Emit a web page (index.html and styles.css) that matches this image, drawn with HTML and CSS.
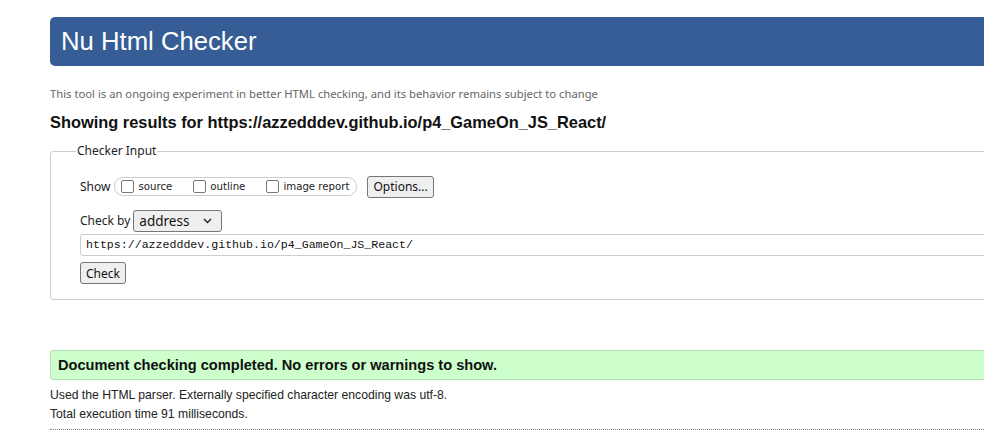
FILE: index.html
```html
<!DOCTYPE html>
<html lang="en">
<head>
<meta charset="utf-8">
<title>Nu Html Checker</title>
<link rel="stylesheet" href="styles.css">
</head>
<body>
<div class="page">
  <h1 class="banner">Nu Html Checker</h1>
  <p class="tagline">This tool is an ongoing experiment in better HTML checking, and its behavior remains subject to change</p>
  <h2 class="results-for">Showing results for https://azzedddev.github.io/p4_GameOn_JS_React/</h2>
  <fieldset class="checker">
    <legend class="checker-legend">Checker Input</legend>
    <div class="row show-row">
      <span class="label">Show</span>
      <span class="show-group">
        <span class="opt"><span class="cb"></span>source</span>
        <span class="opt"><span class="cb"></span>outline</span>
        <span class="opt"><span class="cb"></span>image report</span>
      </span>
      <span class="btn options-btn">Options...</span>
    </div>
    <div class="row checkby-row">
      <span class="label">Check by</span>
      <span class="select">address
        <svg class="chev" width="9" height="6" viewBox="0 0 9 6"><path d="M1 1 L4.5 4.5 L8 1" fill="none" stroke="#222" stroke-width="1.4"/></svg>
      </span>
    </div>
    <div class="url-input">https://azzedddev.github.io/p4_GameOn_JS_React/</div>
    <div class="row"><span class="btn check-btn">Check</span></div>
  </fieldset>
  <p class="success">Document checking completed. No errors or warnings to show.</p>
  <p class="meta">Used the HTML parser. Externally specified character encoding was utf-8.</p>
  <p class="meta">Total execution time 91 milliseconds.</p>
  <div class="dotted"></div>
</div>
</body>
</html>
```
FILE: styles.css
```css
html, body {
  margin: 0;
  padding: 0;
  background: #fff;
  overflow: hidden;
}
.page {
  margin-left: 50px;
  width: 1100px;
  padding-top: 17px;
  font-family: "Liberation Sans", Arial, sans-serif;
  color: #111;
}
.banner {
  margin: 0;
  height: 49px;
  line-height: 49px;
  background: #365d95;
  color: #fff;
  border-radius: 5px;
  padding-left: 11px;
  font-size: 25.7px;
  font-weight: normal;
}
.tagline {
  margin: 21px 0 0;
  font-family: "Noto Sans", sans-serif;
  font-size: 11.25px;
  line-height: 14px;
  color: #666;
}
.results-for {
  margin: 11px 0 0;
  font-size: 16.4px;
  line-height: 20px;
  font-weight: bold;
  color: #111;
}
.checker {
  margin: 11px 0 0;
  padding: 0 0 15px 29px;
  border: 1px solid #ccc;
  border-radius: 3px;
  font-family: "Noto Sans", sans-serif;
  font-size: 12px;
  color: #222;
}
.checker-legend {
  margin-left: -4px;
  padding: 0 1px;
  line-height: 16px;
}
.row {
  display: flex;
  align-items: center;
}
.show-row {
  margin-top: 17px;
  height: 21px;
}
.label {
  line-height: 16px;
}
.show-group {
  display: flex;
  align-items: center;
  margin-left: 4px;
  height: 17px;
  border: 1px solid #ccc;
  border-radius: 9px;
  padding: 0 7px 0 6px;
  font-family: "DejaVu Sans", sans-serif;
  font-size: 10.2px;
}
.opt {
  display: flex;
  align-items: center;
  margin-right: 21px;
}
.opt:last-child {
  margin-right: 0;
}
.cb {
  width: 11px;
  height: 11px;
  border: 1px solid #767676;
  border-radius: 2px;
  margin-right: 4px;
  background: #fff;
}
.btn {
  display: inline-flex;
  align-items: center;
  height: 20px;
  padding: 0 5px;
  border: 1px solid #767676;
  border-radius: 3px;
  background: #efefef;
  font-size: 12px;
  color: #111;
}
.options-btn {
  margin-left: 10px;
}
.checkby-row {
  margin-top: 13px;
}
.select {
  display: inline-flex;
  align-items: center;
  justify-content: space-between;
  box-sizing: border-box;
  width: 89px;
  height: 22px;
  margin-left: 3px;
  padding: 0 9px 0 5px;
  border: 1px solid #767676;
  border-radius: 3px;
  background: #efefef;
  font-size: 13.5px;
  color: #111;
}
.url-input {
  margin-top: 2px;
  box-sizing: border-box;
  height: 22px;
  line-height: 20px;
  border: 1px solid #ccc;
  border-radius: 3px;
  padding-left: 5px;
  font-family: "Liberation Mono", monospace;
  font-size: 11.6px;
  color: #111;
}
.check-btn {
  margin-top: 6px;
  height: 20px;
}
.success {
  margin: 50px 0 0;
  box-sizing: border-box;
  height: 30px;
  line-height: 28px;
  padding-left: 7px;
  background: #ccffcc;
  border: 1px solid #b3dfb3;
  border-radius: 3px;
  font-size: 14.6px;
  font-weight: bold;
  color: #111;
}
.meta {
  margin: 0;
  font-size: 12.2px;
  line-height: 19px;
  color: #222;
}
.success + .meta {
  margin-top: 6px;
}
.dotted {
  margin-top: 5px;
  border-top: 1px dotted #888;
}
```
